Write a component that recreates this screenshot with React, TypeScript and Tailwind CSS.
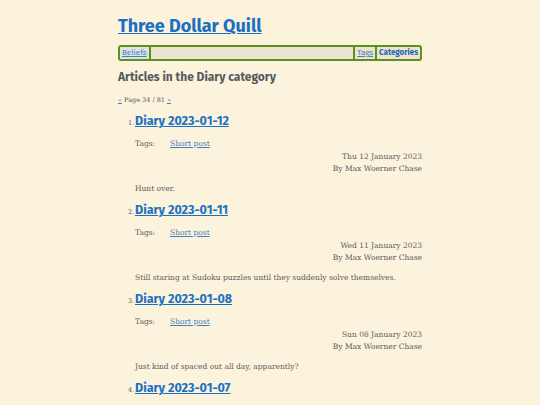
const posts = [
  { n: 1, title: "Diary 2023-01-12", date: "Thu 12 January 2023", body: "Hunt over." },
  { n: 2, title: "Diary 2023-01-11", date: "Wed 11 January 2023", body: "Still staring at Sudoku puzzles until they suddenly solve themselves." },
  { n: 3, title: "Diary 2023-01-08", date: "Sun 08 January 2023", body: "Just kind of spaced out all day, apparently?" },
  { n: 4, title: "Diary 2023-01-07", date: "Sat 07 January 2023", body: "" },
];

const sans = "font-['Fira_Sans','Open_Sans',sans-serif]";
const serif = "font-['Roboto_Slab','DejaVu_Serif',serif]";

const App = () => {
  return (
    <div className="w-full h-[405px] overflow-hidden bg-[#fcf3dc]">
      <div className="w-[304px] mx-auto pt-[14px]">
        <h1 className={`${sans} text-[18px] leading-[24px] font-bold`}>
          <a href="#" className="text-[#1b70c2] underline">Three Dollar Quill</a>
        </h1>
        <nav className={`${sans} mt-[7px] h-[16px] flex items-stretch border-2 border-[#5f8f1c] rounded-[3px] bg-[#ebe4cf] text-[8px] leading-[12px]`}>
          <a href="#" className="px-[2px] bg-[#dfe3e3] text-[#3f7fc2] underline">Beliefs</a>
          <div className="w-[2px] bg-[#5f8f1c]" />
          <div className="flex-1" />
          <div className="w-[2px] bg-[#5f8f1c]" />
          <a href="#" className="px-[2px] text-[#3f7fc2] underline">Tags</a>
          <div className="w-[2px] bg-[#5f8f1c]" />
          <a href="#" className="px-[2px] text-[#2566b3] font-bold">Categories</a>
        </nav>
        <h2 className={`${sans} mt-[7px] text-[12px] leading-[18px] font-bold text-[#555a5c]`}>
          Articles in the Diary category
        </h2>
        <p className={`${serif} mt-[9px] text-[6.5px] leading-[10px] text-[#555]`}>
          <a href="#" className="text-[#3f7fc2] underline">«</a> Page 34 / 81{" "}
          <a href="#" className="text-[#3f7fc2] underline">»</a>
        </p>
        <ol className="mt-[8px] pl-[17px]">
          {posts.map((p) => (
            <li key={p.n} className="mb-[7px]">
              <div className="flex items-baseline">
                <span className={`${serif} w-0 text-[6.5px] text-[#555] relative -left-[7px]`}>{p.n}.</span>
                <a href="#" className={`${sans} text-[12.5px] leading-[16px] font-bold text-[#1b70c2] underline`}>
                  {p.title}
                </a>
              </div>
              <div className={`${serif} text-[7.5px] text-[#5b5b5b]`}>
                <div className="mt-[9px] flex leading-[12px]">
                  <span className="w-[35px]">Tags:</span>
                  <a href="#" className="text-[#3f7fc2] underline">Short post</a>
                </div>
                <div className="text-right leading-[12px] mt-[1px]">{p.date}</div>
                <div className="text-right leading-[12px]">By Max Woerner Chase</div>
                <p className="mt-[8px] leading-[12px]">{p.body}</p>
              </div>
            </li>
          ))}
        </ol>
      </div>
    </div>
  );
};

export default App;
